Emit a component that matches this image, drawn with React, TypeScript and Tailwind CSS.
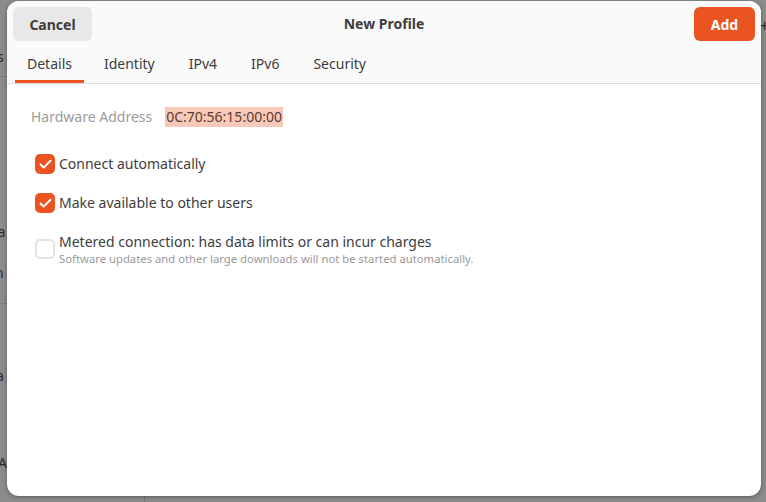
import { Check } from "lucide-react";

const tabs = ["Details", "Identity", "IPv4", "IPv6", "Security"];

const CheckRow = ({ checked, label, hint }: { checked: boolean; label: string; hint?: string }) => (
  <div className={hint ? "flex items-center gap-[4px]" : "flex items-start gap-[4px]"}>
    <div
      className={
        checked
          ? "flex h-[20px] w-[20px] shrink-0 items-center justify-center rounded-[5px] bg-[#e95420]"
          : "h-[20px] w-[20px] shrink-0 rounded-[5px] border-2 border-[#e2e2e2] bg-white"
      }
    >
      {checked && <Check size={15} strokeWidth={3.2} className="text-white" />}
    </div>
    <div className="flex flex-col">
      <span className="text-[14px] leading-[20px] text-[#3d3d3d]">{label}</span>
      {hint && <span className="text-[11.3px] leading-[14px] text-[#9a9a9a]">{hint}</span>}
    </div>
  </div>
);

const App = () => {
  return (
    <div
      className="relative h-[502px] w-[766px] overflow-hidden bg-[#8b8b8b]"
      style={{ fontFamily: '"Noto Sans", "Open Sans", sans-serif' }}
    >
      {/* bits of the window behind the dialog */}
      <div className="absolute left-0 top-[76px] h-px w-[8px] bg-[#7a7a7a]" />
      <div className="absolute left-0 top-[303px] h-px w-[8px] bg-[#7a7a7a]" />
      <div className="absolute left-[144px] top-[496px] h-[6px] w-px bg-[#7a7a7a]" />
      <span className="absolute -left-[3px] top-[46px] text-[14px] text-[#2a2a2a]">s</span>
      <span className="absolute -left-[8px] top-[221px] text-[14px] text-[#2a2a2a]">ra</span>
      <span className="absolute -left-[5px] top-[262px] text-[14px] text-[#2a2a2a]">n</span>
      <span className="absolute -left-[4px] top-[365px] text-[14px] text-[#2a2a2a]">a</span>
      <span className="absolute -left-[2px] top-[452px] text-[14px] text-[#2a2a2a]">A</span>
      <span className="absolute left-[760px] top-[14px] text-[16px] text-[#2a2a2a]">+</span>

      <div className="relative ml-[7px] mt-[1px] flex h-[495px] w-[754px] flex-col overflow-hidden rounded-[12px] bg-white shadow-[0_1px_4px_rgba(0,0,0,0.35)]">
        <div className="flex flex-col border-b border-[#dedede] bg-[#fafafa]">
          <div className="grid h-[40px] grid-cols-[1fr_auto_1fr] items-start px-[6px] pt-[6px]">
            <button className="h-[34px] w-[79px] justify-self-start rounded-[6px] bg-[#e8e8e8] text-[14px] font-bold text-[#3d3d3d]">
              Cancel
            </button>
            <span className="mt-[7px] text-[14px] font-bold leading-[20px] text-[#3d3d3d]">New Profile</span>
            <button className="h-[34px] w-[61px] justify-self-end rounded-[6px] bg-[#e95420] text-[14px] font-bold text-white">
              Add
            </button>
          </div>
          <div className="flex h-[42px] gap-[6px] px-[8px]">
            {tabs.map((t, i) => (
              <div
                key={t}
                className={
                  i === 0
                    ? "flex items-center border-b-[3px] border-[#e95420] px-[12px] pt-[6px] text-[14px] text-[#3d3d3d]"
                    : "flex items-center border-b-[3px] border-transparent px-[14px] pt-[6px] text-[14px] text-[#3d3d3d]"
                }
              >
                {t}
              </div>
            ))}
          </div>
        </div>

        <div className="flex flex-col px-[24px] pt-[22px]">
          <div className="flex items-center gap-[13px]">
            <span className="text-[14px] text-[#9b9b9b]">Hardware Address</span>
            <span className="bg-[#f8c9b8] px-[1px] text-[14px] leading-[20px] text-[#5b3a30]">0C:70:56:15:00:00</span>
          </div>
          <div className="mt-[27px] flex flex-col gap-[19px] pl-[4px]">
            <CheckRow checked label="Connect automatically" />
            <CheckRow checked label="Make available to other users" />
            <CheckRow
              checked={false}
              label="Metered connection: has data limits or can incur charges"
              hint="Software updates and other large downloads will not be started automatically."
            />
          </div>
        </div>
      </div>
    </div>
  );
};

export default App;
